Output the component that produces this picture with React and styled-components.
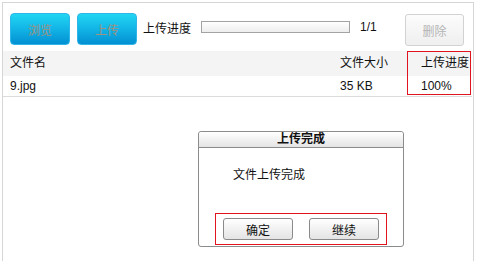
import React from 'react'
import styled, { createGlobalStyle, css } from 'styled-components'

const GlobalStyle = createGlobalStyle`
  body {
    margin: 0;
    background: #fff;
    font-family: "Liberation Sans", "Noto Sans CJK SC", sans-serif;
    font-size: 12px;
    color: #111;
  }
`

const Panel = styled.div`
  position: relative;
  margin: 2px 4px 0 2px;
  height: 270px;
  border: 1px solid #d6d6d6;
  border-bottom: none;
`

const Toolbar = styled.div`
  display: flex;
  align-items: center;
  height: 48px;
  padding: 0 9px 0 7px;
`

const BlueButton = styled.button`
  width: 60px;
  height: 32px;
  margin-top: 4px;
  margin-right: ${props => props.gap || 0}px;
  border: 1px solid #2fb6e6;
  border-radius: 4px;
  background: linear-gradient(#22d6f2, #12b4e6 50%, #0390d2);
  color: #a0927f;
  font: 12px "Liberation Sans", "Noto Sans CJK SC", sans-serif;
  padding: 0;
`

const Label = styled.span`
  margin-right: 10px;
`

const ProgressBar = styled.div`
  width: 147px;
  height: 10px;
  margin-right: 10px;
  border: 1px solid #a3a3a3;
  background: linear-gradient(#ffffff, #eeeeee);
`

const Counter = styled.span`
  font-size: 12px;
`

const GrayButton = styled.button`
  margin-left: auto;
  margin-top: 6px;
  width: 59px;
  height: 32px;
  padding: 0;
  border: 1px solid #d2d2d2;
  border-radius: 3px;
  background: linear-gradient(#fcfcfc, #efefef);
  color: #b4b4b4;
  font: 12px "Liberation Sans", "Noto Sans CJK SC", sans-serif;
`

const Table = styled.div`
  display: flex;
  border-bottom: 1px solid #dcdcdc;
  margin-right: 1px;
`

const Column = styled.div`
  display: flex;
  flex-direction: column;
  flex: ${props => props.width ? `0 0 ${props.width}px` : '1'};
  ${props => props.highlight && css`
    outline: 1px solid #e0141e;
    outline-offset: -1px;
    margin-right: 1px;
    height: 44px;
  `}
`

const HeadCell = styled.div`
  height: 25px;
  line-height: 25px;
  padding-left: ${props => props.pad || 7}px;
  background: #f4f4f4;
  ${props => props.highlight && css`
    margin: 1px 1px 0 1px;
    height: 24px;
    line-height: 23px;
  `}
`

const Cell = styled.div`
  height: 20px;
  line-height: 20px;
  padding-left: ${props => props.pad || 7}px;
  ${props => props.highlight && css`
    padding-left: ${(props.pad || 7) + 1}px;
    height: 19px;
  `}
`

const Dialog = styled.div`
  position: absolute;
  left: 195px;
  top: 128px;
  width: 204px;
  height: 114px;
  border: 1px solid #8c8c8c;
  border-radius: 3px;
  background: #fff;
  display: flex;
  flex-direction: column;
`

const DialogTitle = styled.div`
  height: 15px;
  line-height: 15px;
  text-align: center;
  font-weight: bold;
  border-bottom: 1px solid #8c8c8c;
  border-radius: 3px 3px 0 0;
  background: linear-gradient(#ffffff, #e4e4e4);
`

const DialogBody = styled.div`
  padding: 17px 0 0 34px;
  height: 48px;
`

const ButtonBox = styled.div`
  display: flex;
  justify-content: space-between;
  margin: 0 16px;
  padding: 4px 7px;
  border: 1px solid #e0141e;
`

const DialogButton = styled.button`
  width: 70px;
  height: 22px;
  padding: 0;
  border: 1px solid #8a8a8a;
  border-radius: 3px;
  background: linear-gradient(#ffffff, #e4e4e4);
  color: #111;
  font: 12px "Liberation Sans", "Noto Sans CJK SC", sans-serif;
`

export default function App() {
  return (
    <>
      <GlobalStyle />
      <Panel>
        <Toolbar>
          <BlueButton gap={7}>浏览</BlueButton>
          <BlueButton gap={6}>上传</BlueButton>
          <Label>上传进度</Label>
          <ProgressBar />
          <Counter>1/1</Counter>
          <GrayButton>删除</GrayButton>
        </Toolbar>
        <Table>
          <Column>
            <HeadCell>文件名</HeadCell>
            <Cell>9.jpg</Cell>
          </Column>
          <Column width={74}>
            <HeadCell>文件大小</HeadCell>
            <Cell>35 KB</Cell>
          </Column>
          <Column width={64} highlight>
            <HeadCell pad={13} highlight>上传进度</HeadCell>
            <Cell pad={13} highlight>100%</Cell>
          </Column>
        </Table>
        <Dialog>
          <DialogTitle>上传完成</DialogTitle>
          <DialogBody>文件上传完成</DialogBody>
          <ButtonBox>
            <DialogButton>确定</DialogButton>
            <DialogButton>继续</DialogButton>
          </ButtonBox>
        </Dialog>
      </Panel>
    </>
  )
}
